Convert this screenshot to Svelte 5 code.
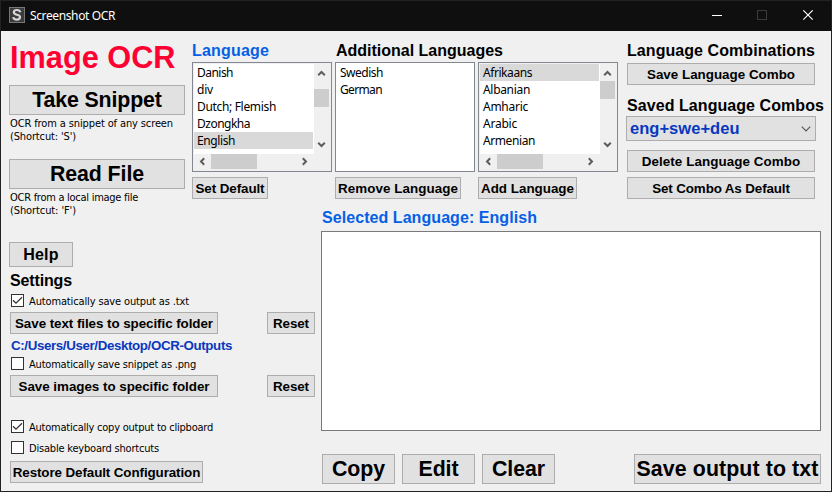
<script>
  const languages = ['Danish', 'div', 'Dutch; Flemish', 'Dzongkha', 'English'];
  const languageWidths = [36, 16, 79, 53, 38];
  const available = ['Afrikaans', 'Albanian', 'Amharic', 'Arabic', 'Armenian'];
  const availableWidths = [49, 47, 45, 34, 52];
  const additional = ['Swedish', 'German'];
  const additionalWidths = [43, 42];

  // Adjusts the tracking of a label so that it takes up the given width.
  function fit(node, width) {
    const natural = node.getBoundingClientRect().width;
    node.style.letterSpacing = `${(width - natural) / node.textContent.length}px`;
  }
</script>

{#snippet label(text, width)}<span class="label" use:fit={width}>{text}</span>{/snippet}

{#snippet arrow(dir)}
  <svg class="arrow {dir}" width="9" height="9" viewBox="0 0 9 9"><path d="M1.2 6.2 4.5 3l3.3 3.2" fill="none" stroke="#5c5c5c" stroke-width="2" /></svg>
{/snippet}

{#snippet check(text, width, on)}
  <div class="check">
    <span class="box">
      {#if on}<svg width="11" height="11" viewBox="0 0 11 11"><path d="M1 5.2 4 8.2 10 2.2" fill="none" stroke="#333" stroke-width="1.3" /></svg>{/if}
    </span>
    {@render label(text, width)}
  </div>
{/snippet}

{#snippet scrollList(items, widths, selected, kind)}
  <div class="list">
    <div class="upper">
      <div class="rows">
        {#each items as item, i}
          <div class="row" class:selected={i === selected}>{@render label(item, widths[i])}</div>
        {/each}
      </div>
      <div class="vbar">{@render arrow('up')}<i class="thumb {kind}"></i>{@render arrow('down')}</div>
    </div>
    <div class="hbar">{@render arrow('left')}<i class="thumb"></i>{@render arrow('right')}</div>
  </div>
{/snippet}

<div class="window">
  <header>
    <svg class="logo" width="16" height="16" viewBox="0 0 16 16">
      <rect x=".5" y=".5" width="15" height="15" fill="#3c3c3c" stroke="#777" />
      <path d="M11.3 5.3C10.8 3.5 9.5 3 7.9 3 6 3 4.8 3.9 4.8 5.3c0 3.2 6.2 1.6 6.2 4.7 0 1.7-1.4 2.6-3.2 2.6-2 0-3.3-.9-3.5-2.5" fill="none" stroke="#d8d8d8" stroke-width="2.2" />
    </svg>
    <span class="caption">{@render label('Screenshot OCR', 85)}</span>
    <svg class="controls" width="104" height="11" viewBox="0 0 104 11">
      <path d="M0 5.5h10" stroke="#fff" />
      <rect x="45.5" y=".5" width="9" height="9" fill="none" stroke="#3b3b3b" />
      <path d="M91.3.3l9.4 9.4M100.7.3l-9.4 9.4" stroke="#fff" stroke-width="1.1" />
    </svg>
  </header>

  <div class="body">
    <aside>
      <h1>{@render label('Image OCR', 165.5)}</h1>
      <button class="large wide">{@render label('Take Snippet', 129.5)}</button>
      <p>{@render label('OCR from a snippet of any screen', 163)}<br />{@render label("(Shortcut: 'S')", 66)}</p>
      <button class="large wide">{@render label('Read File', 94)}</button>
      <p>{@render label('OCR from a local image file', 128)}<br />{@render label("(Shortcut: 'F')", 66)}</p>
      <button class="help">{@render label('Help', 35.5)}</button>
      <section class="settings">
        <h2>{@render label('Settings', 62)}</h2>
        {@render check('Automatically save output as .txt', 160, true)}
        <div class="pair">
          <button class="folder">{@render label('Save text files to specific folder', 198)}</button>
          <button class="reset">{@render label('Reset', 36)}</button>
        </div>
        <div class="path">{@render label('C:/Users/User/Desktop/OCR-Outputs', 221)}</div>
        {@render check('Automatically save snippet as .png', 167, false)}
        <div class="pair">
          <button class="folder">{@render label('Save images to specific folder', 191)}</button>
          <button class="reset">{@render label('Reset', 36)}</button>
        </div>
        <div class="options">
          {@render check('Automatically copy output to clipboard', 184, true)}
          {@render check('Disable keyboard shortcuts', 130, false)}
        </div>
        <button class="restore">{@render label('Restore Default Configuration', 187.5)}</button>
      </section>
    </aside>

    <main>
      <div class="top">
        <section class="column">
          <h2 class="blue">{@render label('Language', 77)}</h2>
          {@render scrollList(languages, languageWidths, 4, 'lower')}
          <button class="set">{@render label('Set Default', 69)}</button>
        </section>
        <section class="column">
          <h2 class="indent">{@render label('Additional Languages', 167)}</h2>
          <div class="list plain">
            {#each additional as item, i}
              <div class="row">{@render label(item, additionalWidths[i])}</div>
            {/each}
          </div>
          <button class="remove">{@render label('Remove Language', 120)}</button>
        </section>
        <section class="column">
          <h2></h2>
          {@render scrollList(available, availableWidths, 0, 'first')}
          <button class="add">{@render label('Add Language', 93)}</button>
        </section>
        <section class="combos">
          <h2>{@render label('Language Combinations', 188)}</h2>
          <button>{@render label('Save Language Combo', 148)}</button>
          <h2 class="saved">{@render label('Saved Language Combos', 197)}</h2>
          <div class="select">
            {@render label('eng+swe+deu', 109.5)}
            <svg width="10" height="6" viewBox="0 0 10 6"><path d="M.8.7 5 4.9 9.2.7" fill="none" stroke="#555" stroke-width="1.1" /></svg>
          </div>
          <button class="delete">{@render label('Delete Language Combo', 158.5)}</button>
          <button>{@render label('Set Combo As Default', 137.5)}</button>
        </section>
      </div>

      <section class="output">
        <h2 class="blue">{@render label('Selected Language: English', 215)}</h2>
        <div class="text"></div>
        <div class="actions">
          <button class="large">{@render label('Copy', 53)}</button>
          <button class="large">{@render label('Edit', 40)}</button>
          <button class="large">{@render label('Clear', 53)}</button>
          <button class="large save">{@render label('Save output to txt', 182)}</button>
        </div>
      </section>
    </main>
  </div>
</div>

<style>
  * { box-sizing: border-box; }
  .window {
    width: 832px; height: 492px; border: 1px solid #222; background: #f0f0f0; color: #000;
    display: flex; flex-direction: column; overflow: hidden;
    font: 13px "Liberation Sans", Arial, sans-serif;
  }
  header { height: 30px; flex: none; background: #0f0f0f; color: #fff; display: flex; padding-left: 8px; }
  .logo { margin-top: 6px; }
  .caption { font: 12px/30px "Noto Sans", sans-serif; margin-left: 5px; }
  .controls { margin: 9px 15px 0 auto; }
  .label { display: inline-block; white-space: nowrap; }
  .body { flex: 1; display: flex; min-height: 0; }

  h1 { font-size: 30.67px; line-height: 36px; height: 36px; margin: 8px 0 10px; padding-left: 1px; color: #ff0033; }
  h2 { font-size: 16px; line-height: 19px; height: 19px; margin: 0; white-space: nowrap; }
  .blue { color: #0560e6; }
  p { font: 11px/13px "DejaVu Sans Condensed", "DejaVu Sans", sans-serif; font-stretch: condensed; margin: 2px 0 16px 1px; height: 26px; }
  button {
    display: flex; align-items: center; justify-content: center; flex: none;
    height: 22px; margin: 0; padding: 2px 0 0; border: 1px solid #adadad; border-radius: 0; background: #e1e1e1; color: #000;
    font: bold 13.4px/18px "Liberation Sans", Arial, sans-serif; white-space: nowrap;
  }
  .large { height: 30px; padding: 0; font-size: 21.33px; line-height: 28px; }

  aside { width: 310px; flex: none; padding-left: 8px; margin-right: -127px; }
  .wide { width: 176px; }
  .help { width: 64px; height: 25px; padding: 0; font-size: 16px; margin-top: 25px; }
  .settings { padding: 4px 0 0 1px; }
  .check { display: flex; height: 13px; margin: 4px 0 5px 1px; gap: 5px; font: 11px/15px "DejaVu Sans Condensed", "DejaVu Sans", sans-serif; font-stretch: condensed; }
  .box { width: 13px; height: 13px; flex: none; border: 1px solid #333; background: #fff; }
  .box svg { display: block; }
  .pair { display: flex; gap: 49px; }
  .folder { width: 208px; }
  .reset { width: 48px; }
  .path { font-weight: bold; font-size: 13.33px; line-height: 19px; height: 19px; margin: 2px 0 -2px 1px; color: #0a38be; }
  .options { display: flex; flex-direction: column; padding-top: 19px; }
  .options .check { margin-bottom: 4px; }
  .restore { width: 193px; margin-top: 3px; }

  main { flex: 1; padding: 10px 0 0 8px; }
  .top { display: flex; gap: 3px; height: 165px; }
  .column { width: 140px; flex: none; display: flex; flex-direction: column; }
  .indent { padding-left: 1px; }
  .list { height: 110px; margin: 2px 0 5px; padding: 1px; border: 1px solid #828790; font: 12px/17px "Noto Sans", sans-serif; }
  .plain { background: #fff; }
  .plain .row { width: auto; }
  .upper { display: flex; height: 90px; }
  .rows { width: 120px; background: #fff; flex: none; }
  .row { height: 17px; width: 119px; padding-left: 3px; }
  .selected { background: #d9d9d9; }
  .vbar { width: 15px; display: flex; flex-direction: column; align-items: center; }
  .hbar { height: 15px; display: flex; align-items: center; }
  .thumb { background: #cdcdcd; flex: none; width: 46px; height: 15px; }
  .vbar .thumb { width: 15px; height: 18px; }
  .lower { margin: 11px 0 33px; }
  .first { margin: 3px 0 41px; }
  .arrow { flex: none; }
  .vbar .up { margin-top: 5px; }
  .down { transform: rotate(180deg); }
  .left { transform: rotate(-90deg); margin: 0 4px 0 4px; }
  .right { transform: rotate(90deg); margin-left: 43px; }
  .set { width: 76px; }
  .remove { width: 126px; }
  .add { width: 99px; }

  .combos { width: 188px; margin-left: 6px; display: flex; flex-direction: column; }
  .combos h2 { margin-bottom: 3px; }
  .combos .saved { margin: 11px 0 1px; }
  .select {
    display: flex; align-items: center; justify-content: space-between; flex: none;
    width: 190px; height: 25px; margin: 0 -1px 9px; padding: 0 4px 0 3px;
    border: 1px solid #adadad; background: #e1e1e1; color: #0838be; font-weight: bold; font-size: 16.5px; line-height: 23px;
  }
  .delete { margin-bottom: 5px; }

  .output { width: 500px; margin: 2px 0 0 129px; }
  .output .blue { padding-left: 1px; }
  .text { height: 200px; margin-top: 4px; border: 1px solid #7a7a7a; background: #fff; }
  .actions { display: flex; gap: 7px; margin: 23px 0 0 1px; }
  .actions .large { width: 73px; }
  .actions .save { width: 187px; margin-left: auto; }
</style>
